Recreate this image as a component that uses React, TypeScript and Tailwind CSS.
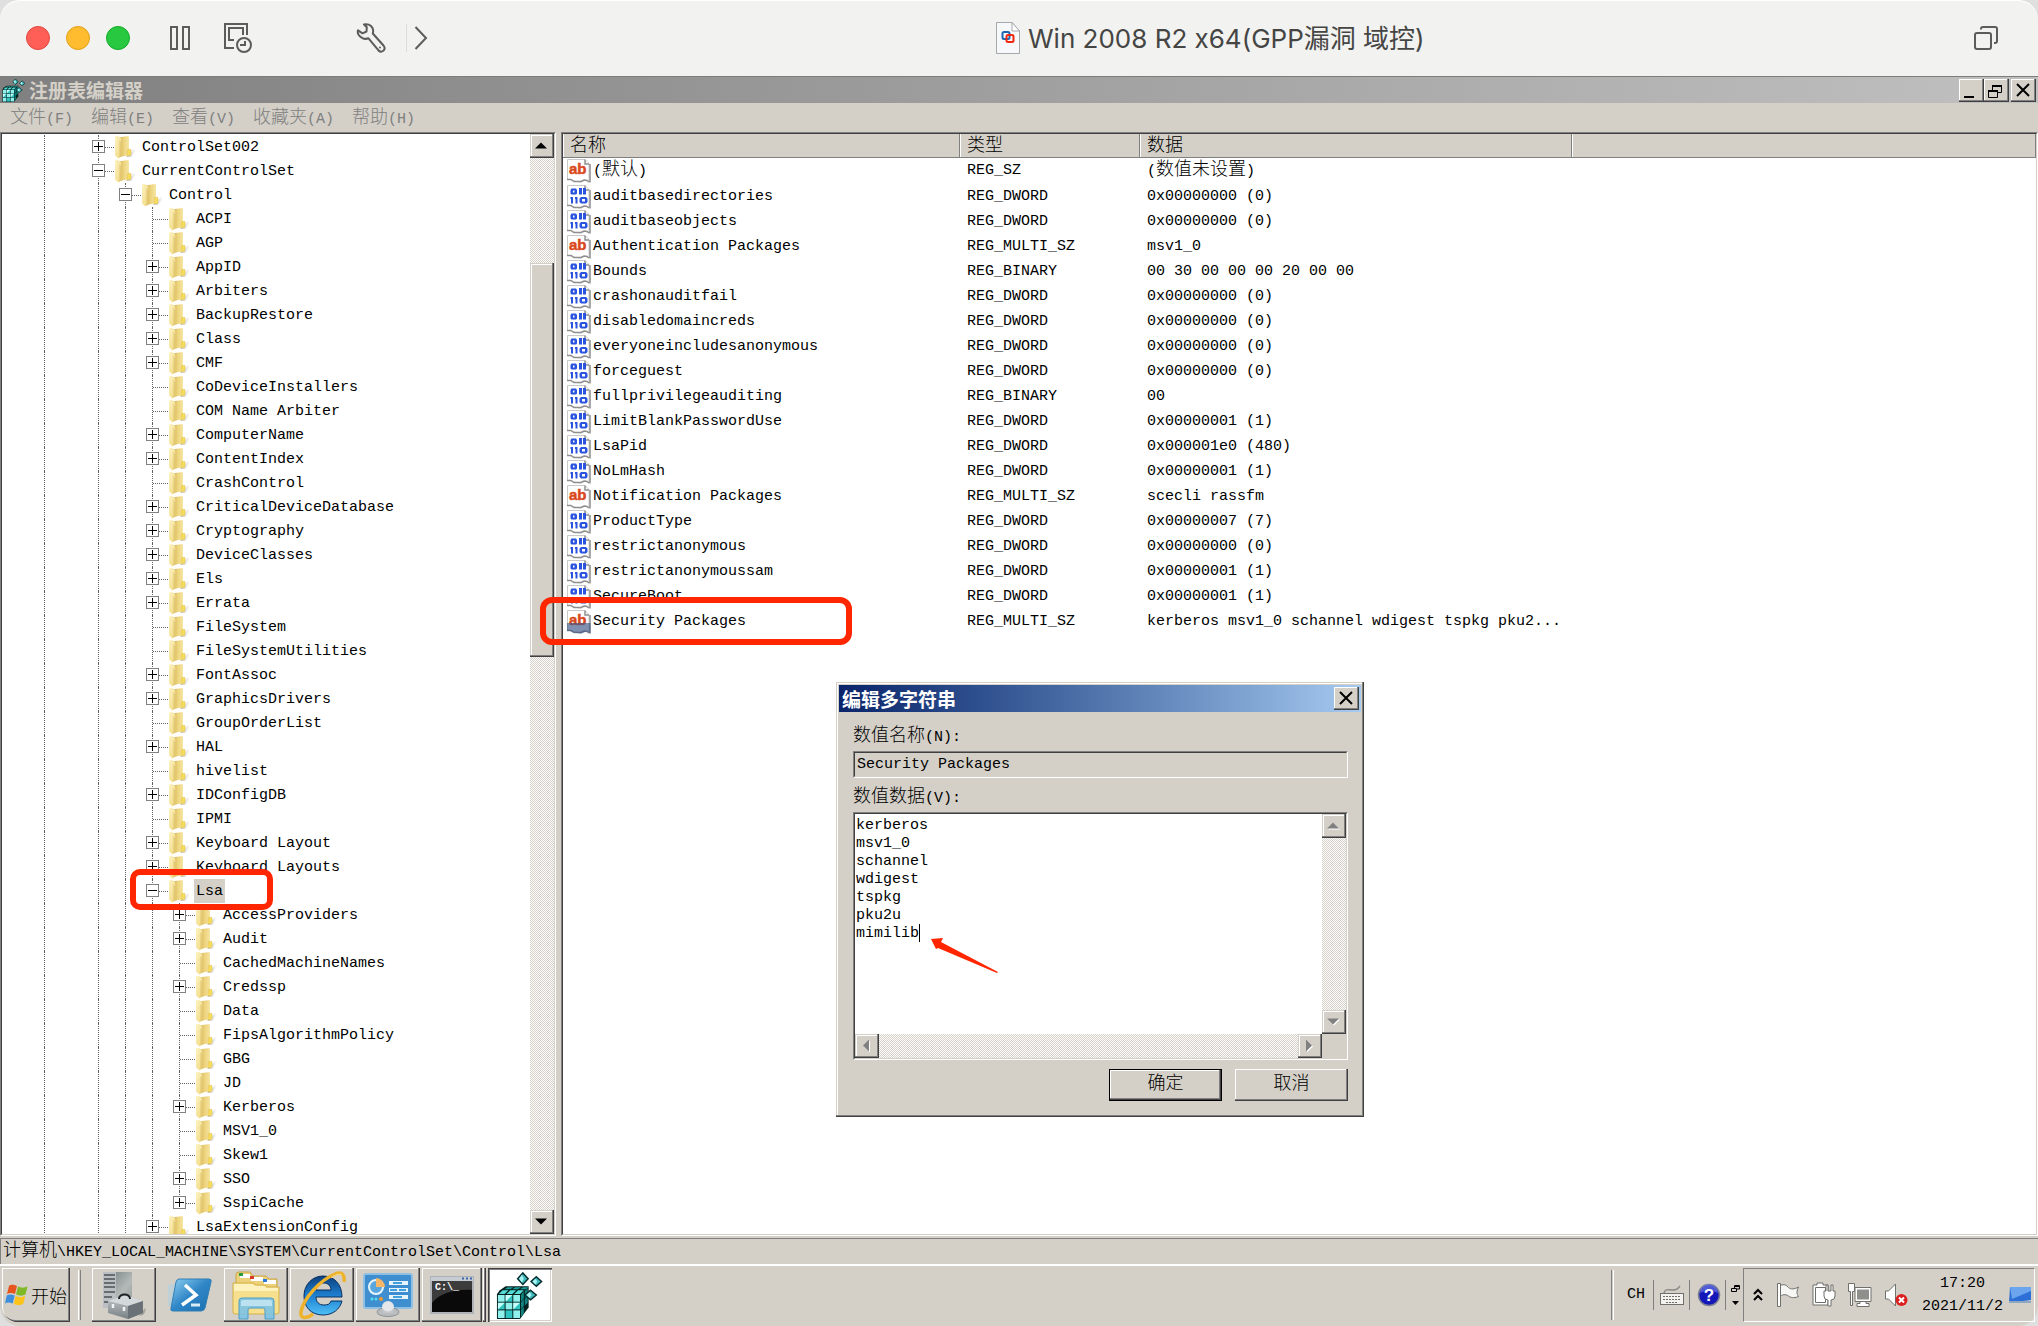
import React from "react";

const MONO = "font-['Liberation_Mono','Noto_Sans_CJK_SC',monospace] text-[15px]";
const RAISED =
  "bg-[#d4d0c8] shadow-[inset_-1px_-1px_0_#404040,inset_-2px_-2px_0_#808080,inset_1px_1px_0_#d4d0c8,inset_2px_2px_0_#ffffff]";
const RAISED_HI =
  "bg-[#d4d0c8] shadow-[inset_-1px_-1px_0_#404040,inset_-2px_-2px_0_#808080,inset_1px_1px_0_#ffffff]";
const TRACK =
  "bg-[repeating-conic-gradient(#ffffff_0_25%,#d4d0c8_0_50%)] bg-[length:2px_2px]";

/* Chinese characters are two columns wide, so they take a larger size than the Latin ones. */
function T({ children }: { children: string }) {
  return (
    <>
      {children.split(/([\u4e00-\u9fff]+)/).map((part, i) =>
        i % 2 ? (
          <span key={i} className="font-['Noto_Sans_CJK_SC',sans-serif] text-[18px] font-light leading-none">
            {part}
          </span>
        ) : (
          part
        ),
      )}
    </>
  );
}

function Sunken({ className, children }: { className: string; children: React.ReactNode }) {
  return (
    <div
      className={`flex border border-t-[#808080] border-r-white border-b-white border-l-[#808080] ${className}`}
    >
      <div className="flex min-w-0 flex-1 border border-t-[#404040] border-r-[#d4d0c8] border-b-[#d4d0c8] border-l-[#404040]">
        {children}
      </div>
    </div>
  );
}

/* ---------- host window toolbar ---------- */

function HostBar() {
  return (
    <header className="relative flex h-[77px] shrink-0 items-center rounded-t-[20px] border-b border-[#7b7f7b] bg-[#f2f2f0] pl-[26px] pr-[40px] shadow-[inset_0_1px_0_#ffffff]">
      <div className="flex gap-4">
        <button aria-label="关闭" className="size-6 rounded-full border border-[#e2463f] bg-[#ff5f57]" />
        <button aria-label="最小化" className="size-6 rounded-full border border-[#e1a116] bg-[#febc2e]" />
        <button aria-label="缩放" className="size-6 rounded-full border border-[#12ac28] bg-[#28c840]" />
      </div>
      <button aria-label="挂起" className="ml-10">
        <svg width="20" height="26" viewBox="0 0 20 26" fill="none" stroke="#5c5c5b" strokeWidth="2">
          <rect x="1" y="2" width="6" height="22" />
          <rect x="13" y="2" width="6" height="22" />
        </svg>
      </button>
      <button aria-label="快照" className="ml-[34px]">
        <svg width="28" height="30" viewBox="0 0 28 30" fill="none" stroke="#5c5c5b" strokeWidth="2">
          <path d="M10 25H1V1h22v11" />
          <path d="M10 17H5V5h14v7" />
          <circle cx="20" cy="22" r="7" />
          <path d="M21 18v4h-5" />
        </svg>
      </button>
      <button aria-label="设置" className="ml-[104px]">
        <svg width="30" height="30" viewBox="0 0 30 30" fill="none" stroke="#5c5c5b" strokeWidth="2" strokeLinejoin="round">
          <path d="M8 1.500c3-1 7 .3 8.500 3.500.9 2 .8 3.800.3 5.500L27.500 22.500c1.500 2 1.300 4-.2 5.300-1.500 1.200-3.500 1-5-.6L12.500 15.300c-2 .8-4.500.7-6.500-.5C2.800 13 1.200 10 2 7.300l4.500 3 4-1.800.3-4.200z" />
          <circle cx="24" cy="24.500" r="1" fill="#5c5c5b" stroke="none" />
        </svg>
      </button>
      <div className="ml-[20px] h-7 w-px bg-[#dcdcda]" />
      <button aria-label="更多" className="ml-[7px]">
        <svg width="14" height="26" viewBox="0 0 14 26" fill="none" stroke="#5c5c5b" strokeWidth="2">
          <path d="M1.500 2 12 13 1.500 24" />
        </svg>
      </button>
      <div className="ml-[568px] flex items-center gap-[8px]">
        <svg width="24" height="32" viewBox="0 0 24 32">
          <path d="M.5.5h15.500l7.500 8.500v22.500H.5z" fill="#f7f8fa" stroke="#a5a8ad" />
          <path d="M16 .5V9h7.500z" fill="#ffffff" stroke="#a5a8ad" />
          <rect x="6.500" y="10" width="7" height="7" rx="1.500" fill="none" stroke="#1f66b0" strokeWidth="2" />
          <rect x="10.500" y="13" width="7" height="7" rx="1.500" fill="none" stroke="#f3260f" strokeWidth="2" />
        </svg>
        <h1 className="whitespace-nowrap pt-[2px] font-['Inter','Noto_Sans_CJK_SC',sans-serif] text-[26px] leading-8 text-[#454544] [font-feature-settings:'calt'_0]">
          Win 2008 R2 x64(GPP漏洞 域控)
        </h1>
      </div>
      <button aria-label="窗口" className="ml-auto">
        <svg width="24" height="26" viewBox="0 0 24 26" fill="none" stroke="#5c5c5b" strokeWidth="2">
          <rect x="1" y="8" width="16" height="16" rx="2" />
          <path d="M7 4.500V4a2 2 0 0 1 2-2h12a2 2 0 0 1 2 2v12a2 2 0 0 1-2 2h-1" />
        </svg>
      </button>
    </header>
  );
}

/* ---------- icons ---------- */

function RegeditIcon({ className }: { className: string }) {
  return (
    <svg className={className} viewBox="0 0 48 50">
      <path d="M0 24 3 20 9 16h24v22l-9 12H0z" fill="#04211f" />
      {[0, 1, 2].map((r) =>
        [0, 1, 2].map((c) => (
          <g key={`${r}${c}`}>
            <path d={["M1 25h7v7H1z", "M9 25h7v7H9z", "M17 25h7v7h-7z", "M1 33h7v7H1z", "M9 33h7v7H9z", "M17 33h7v7h-7z", "M1 41h7v8H1z", "M9 41h7v8H9z", "M17 41h7v8h-7z"][r * 3 + c]} fill={(r + c) % 2 ? "#2fc4bf" : "#8ff0ec"} />
          </g>
        )),
      )}
      <path d="M2 24l4-4h6l-4 4zM10 24l4-4h6l-4 4zM18 24l4-4h6l-4 4z" fill="#54dcd7" />
      <path d="M8 19l3-2h6l-3 2zM16 19l3-2h6l-3 2zM24 19l3-2h6l-3 2z" fill="#1a9c98" />
      <path d="M9 25h7l-7 7zM1 33h7l-7 7zM17 33h7l-7 7z" fill="#c6fffc" />
      <path d="M25 25l3-4v7l-3 4zM29 21l3-3v7l-3 3zM25 33l3-4v7l-3 4zM29 29l3-3v7l-3 3zM25 41l3-4v7l-3 4z" fill="#118481" />
      <path d="M27 2l5.500 6-5.500 6-5.500-6z" fill="#3fb9bb" stroke="#062b2b" strokeWidth="1.500" />
      <path d="M41 6l5.500 5-5.500 5-5.500-5z" fill="#3fb9bb" stroke="#062b2b" strokeWidth="1.500" />
      <path d="M35 20l6 5-6 5-6-5z" fill="#3fb9bb" stroke="#062b2b" strokeWidth="1.500" />
      <path d="M26 4l2 4-2 4-3-4zM40 8l2 3-2 3-3-3zM34 22l2 3-2 3-3-3z" fill="#a8f3f1" />
    </svg>
  );
}

function FolderIcon() {
  return (
    <svg width="24" height="24" viewBox="0 0 24 24" className="shrink-0">
      <defs>
        <linearGradient id="folderFront" x1="0" x2="1" y1="0" y2="1">
          <stop offset="0" stopColor="#fdf4c4" />
          <stop offset="1" stopColor="#f0d67c" />
        </linearGradient>
        <linearGradient id="folderBack" x1="0" x2="1">
          <stop offset="0" stopColor="#c9a548" />
          <stop offset=".5" stopColor="#ecd27a" />
          <stop offset="1" stopColor="#f6e6a4" />
        </linearGradient>
        <linearGradient id="folderShade" x1="0" x2="1">
          <stop offset="0" stopColor="#bdbdbd" />
          <stop offset="1" stopColor="#bdbdbd" stopOpacity="0" />
        </linearGradient>
      </defs>
      <path d="M12 22l8-8q2 0 2 2l-5 6z" fill="url(#folderShade)" />
      <path d="M4 2.500 14 1l1 1v18l-9 2z" fill="url(#folderBack)" />
      <path d="M1 1.500 3 .5l4 2.500.5 4V21l-3 2.500L1 20.500z" fill="url(#folderFront)" />
      <path d="M7.500 7v14l-2 2V5z" fill="#d8b962" fillOpacity=".6" />
      <path d="M13.500 14.500h3.500V20l-4 1z" fill="#f5dc5e" stroke="#e0c04a" strokeWidth=".5" />
    </svg>
  );
}

function ValueIcon({ text, selected }: { text: boolean; selected?: boolean }) {
  return (
    <svg width="24" height="24" viewBox="0 0 24 24" className="shrink-0">
      <path d="M.5.5H18l4 4V23l-3-2-2 .5-3 1.500-8-1L4 20.500H.5z" fill="#ffffff" stroke="#c9c9c9" />
      <path d="M18 .5V5h4M23 5v18.500M0 20.500h4l3 2h7l3-1.500 3 .5 2 1.500" fill="none" stroke="#8f8f8f" strokeWidth="1.500" />
      {text ? (
        <text x="2" y="15" fill="#d9481c" stroke="#d9481c" strokeWidth=".5" fontFamily="Liberation Sans" fontWeight="bold" fontSize="15">
          ab
        </text>
      ) : (
        <g fill="#2a53e0">
          <path d="M4.500 3.500H9L10 5v3.500l-1 1H4.500l-1-1V5zM6 5.500v2h1.500v-2z" fillRule="evenodd" />
          <path d="M12 3h3v6.500h-3zM16 3h3v6.500h-3z" />
          <path d="M3.500 12H6v6.500H4V14h-.5zM8 12h2.500v6.500h-2V14H8z" />
          <path d="M14 12h5l1.500 1.500V17L19 18.500h-5L12.500 17v-3.500zM15 14v2.500h3V14z" fillRule="evenodd" />
        </g>
      )}
      {selected && <path d="M0 13h23.500v10.500l-4-2-5.500 2-8-1L3 21H0z" fill="#3b5486" fillOpacity=".65" />}
    </svg>
  );
}

/* ---------- registry editor ---------- */

function WindowButton({ label, children }: { label: string; children: React.ReactNode }) {
  return (
    <button aria-label={label} className={`flex h-[23px] w-[25px] items-center justify-center ${RAISED_HI}`}>
      <svg width="19" height="17" viewBox="0 0 19 17" fill="none" stroke="#000000" strokeWidth="2">
        {children}
      </svg>
    </button>
  );
}

function EditorTitle() {
  return (
    <div className="flex h-[26px] shrink-0 items-center bg-linear-to-r from-[#808080] to-[#c0c0c0] pl-[2px] pr-[2px]">
      <RegeditIcon className="size-6" />
      <h2 className="ml-[3px] flex-1 font-['Noto_Sans_CJK_SC',sans-serif] text-[19px] font-bold leading-6 text-[#d4d0c8]">
        注册表编辑器
      </h2>
      <div className="flex">
        <WindowButton label="最小化">
          <path d="M2 15h10" />
        </WindowButton>
        <WindowButton label="还原">
          <path d="M5.500 8V3.500h9v7H11" strokeWidth="1" />
          <path d="M5 4h10M1 9h10" />
          <path d="M1.500 8.500h9v7h-9z" strokeWidth="1" />
        </WindowButton>
        <div className="w-[2px]" />
        <WindowButton label="关闭">
          <path d="M3 2l12 12M15 2L3 14" />
        </WindowButton>
      </div>
    </div>
  );
}

function MenuBar() {
  return (
    <nav className={`flex h-[29px] shrink-0 items-center gap-[18px] pl-[10px] pt-[2px] text-[#808080] ${MONO}`}>
      {["文件(F)", "编辑(E)", "查看(V)", "收藏夹(A)", "帮助(H)"].map((m) => (
        <button key={m} className="whitespace-nowrap leading-6">
          <T>{m}</T>
        </button>
      ))}
    </nav>
  );
}

type Node = [name: string, level: number, state: "+" | "-" | ""];

const TREE: Node[] = [
  ["ControlSet002", 2, "+"],
  ["CurrentControlSet", 2, "-"],
  ["Control", 3, "-"],
  ["ACPI", 4, ""],
  ["AGP", 4, ""],
  ["AppID", 4, "+"],
  ["Arbiters", 4, "+"],
  ["BackupRestore", 4, "+"],
  ["Class", 4, "+"],
  ["CMF", 4, "+"],
  ["CoDeviceInstallers", 4, ""],
  ["COM Name Arbiter", 4, ""],
  ["ComputerName", 4, "+"],
  ["ContentIndex", 4, "+"],
  ["CrashControl", 4, ""],
  ["CriticalDeviceDatabase", 4, "+"],
  ["Cryptography", 4, "+"],
  ["DeviceClasses", 4, "+"],
  ["Els", 4, "+"],
  ["Errata", 4, "+"],
  ["FileSystem", 4, ""],
  ["FileSystemUtilities", 4, ""],
  ["FontAssoc", 4, "+"],
  ["GraphicsDrivers", 4, "+"],
  ["GroupOrderList", 4, ""],
  ["HAL", 4, "+"],
  ["hivelist", 4, ""],
  ["IDConfigDB", 4, "+"],
  ["IPMI", 4, ""],
  ["Keyboard Layout", 4, "+"],
  ["Keyboard Layouts", 4, "+"],
  ["Lsa", 4, "-"],
  ["AccessProviders", 5, "+"],
  ["Audit", 5, "+"],
  ["CachedMachineNames", 5, ""],
  ["Credssp", 5, "+"],
  ["Data", 5, ""],
  ["FipsAlgorithmPolicy", 5, ""],
  ["GBG", 5, ""],
  ["JD", 5, ""],
  ["Kerberos", 5, "+"],
  ["MSV1_0", 5, ""],
  ["Skew1", 5, ""],
  ["SSO", 5, "+"],
  ["SspiCache", 5, "+"],
  ["LsaExtensionConfig", 4, "+"],
];

function TreeRow({ node: [name, level, state] }: { node: Node }) {
  const selected = name === "Lsa";
  return (
    <li role="treeitem" className="relative flex h-6 items-center">
      {Array.from({ length: level }, (_, i) => (
        <span key={i} className="flex h-6 w-[27px] shrink-0 pl-[13px]">
          {i !== 1 && <span className="border-l border-dotted border-[#606060]" />}
        </span>
      ))}
      <span className="relative flex h-6 w-[29px] shrink-0 items-center pl-[13px]">
        <span
          className={`border-l border-dotted border-[#606060] ${name === "SspiCache" ? "h-3 self-start" : "h-6"}`}
        />
        <span className="flex-1 border-t border-dotted border-[#606060]" />
        {state && (
          <button
            aria-label={state === "+" ? "展开" : "折叠"}
            className="absolute left-[7px] top-[5px] flex size-[13px] items-center justify-center border border-[#808080] bg-white"
          >
            <svg width="9" height="9" viewBox="0 0 9 9" stroke="#000000" strokeWidth="1">
              <path d={state === "+" ? "M0 4.500h9M4.500 0v9" : "M0 4.500h9"} />
            </svg>
          </button>
        )}
      </span>
      <FolderIcon />
      <span
        className={`ml-[2px] whitespace-pre px-[2px] pt-[2px] leading-[22px] ${selected ? "bg-[#d4d0c8]" : ""}`}
      >
        {name}
      </span>
      {selected && (
        <span className="absolute left-[99px] top-[-10px] z-10 h-[41px] w-[143px] rounded-[10px] border-[6px] border-[#ff2600]" />
      )}
    </li>
  );
}

function ScrollArrow({ dir, disabled }: { dir: "up" | "down" | "left" | "right"; disabled?: boolean }) {
  const d = {
    up: "M6 3.500 12 9.500H0z",
    down: "M0 3.500h12L6 9.500z",
    left: "M3 6.500 9 .5v12z",
    right: "M3 .5 9 6.500 3 12.500z",
  }[dir];
  const label = { up: "向上滚动", down: "向下滚动", left: "向左滚动", right: "向右滚动" }[dir];
  return (
    <button aria-label={label} className={`flex size-6 shrink-0 items-center justify-center ${RAISED}`}>
      <svg width="14" height="14" viewBox="0 0 14 14">
        {disabled && <path d={d} fill="#ffffff" transform="translate(1 1)" />}
        <path d={d} fill={disabled ? "#808080" : "#000000"} />
      </svg>
    </button>
  );
}

function TreePane() {
  return (
    <Sunken className="w-[556px] shrink-0 bg-white">
      <ul role="tree" aria-label="注册表项" className={`min-h-0 flex-1 overflow-hidden pl-[29px] pt-px text-black ${MONO}`}>
        {TREE.map((n, i) => (
          <TreeRow key={i} node={n} />
        ))}
      </ul>
      <div className={`flex w-6 shrink-0 flex-col ${TRACK}`}>
        <ScrollArrow dir="up" />
        <div className="h-[105px]" />
        <div className={`h-[394px] ${RAISED}`} />
        <div className="mt-auto flex">
          <ScrollArrow dir="down" />
        </div>
      </div>
    </Sunken>
  );
}

const VALUES: [name: string, type: string, data: string][] = [
  ["(默认)", "REG_SZ", "(数值未设置)"],
  ["auditbasedirectories", "REG_DWORD", "0x00000000 (0)"],
  ["auditbaseobjects", "REG_DWORD", "0x00000000 (0)"],
  ["Authentication Packages", "REG_MULTI_SZ", "msv1_0"],
  ["Bounds", "REG_BINARY", "00 30 00 00 00 20 00 00"],
  ["crashonauditfail", "REG_DWORD", "0x00000000 (0)"],
  ["disabledomaincreds", "REG_DWORD", "0x00000000 (0)"],
  ["everyoneincludesanonymous", "REG_DWORD", "0x00000000 (0)"],
  ["forceguest", "REG_DWORD", "0x00000000 (0)"],
  ["fullprivilegeauditing", "REG_BINARY", "00"],
  ["LimitBlankPasswordUse", "REG_DWORD", "0x00000001 (1)"],
  ["LsaPid", "REG_DWORD", "0x000001e0 (480)"],
  ["NoLmHash", "REG_DWORD", "0x00000001 (1)"],
  ["Notification Packages", "REG_MULTI_SZ", "scecli rassfm"],
  ["ProductType", "REG_DWORD", "0x00000007 (7)"],
  ["restrictanonymous", "REG_DWORD", "0x00000000 (0)"],
  ["restrictanonymoussam", "REG_DWORD", "0x00000001 (1)"],
  ["SecureBoot", "REG_DWORD", "0x00000001 (1)"],
  ["Security Packages", "REG_MULTI_SZ", "kerberos msv1_0 schannel wdigest tspkg pku2..."],
];

function ValueTable() {
  return (
    <table className={`w-full table-fixed border-collapse self-start text-left text-black ${MONO}`}>
      <colgroup>
        <col className="w-[397px]" />
        <col className="w-[180px]" />
        <col className="w-[432px]" />
        <col />
      </colgroup>
      <thead>
        <tr>
          {["名称", "类型", "数据", ""].map((h, i) => (
            <th
              key={i}
              className="h-[23px] bg-[#d4d0c8] p-0 pl-[7px] font-normal leading-5 shadow-[inset_-1px_-1px_0_#808080,inset_1px_0_0_#ffffff]"
            >
              <T>{h}</T>
            </th>
          ))}
        </tr>
      </thead>
      <tbody>
        {VALUES.map(([name, type, data]) => (
          <tr key={name}>
            <td className="relative h-[25px] p-0 pl-1">
              <div className="flex items-center gap-[2px] whitespace-pre leading-6">
                <ValueIcon text={type.endsWith("SZ")} selected={name === "Security Packages"} />
                <span>
                  <T>{name}</T>
                </span>
              </div>
              {name === "Security Packages" && (
                <span className="absolute left-[-23px] top-[-12px] z-10 h-12 w-[312px] rounded-xl border-[6px] border-[#ff2600]" />
              )}
            </td>
            <td className="p-0 pl-[7px] leading-6">{type}</td>
            <td className="whitespace-pre p-0 pl-[7px] leading-6">
              <T>{data}</T>
            </td>
            <td />
          </tr>
        ))}
      </tbody>
    </table>
  );
}

function EditDialog() {
  return (
    <section
      role="dialog"
      aria-label="编辑多字符串"
      className={`absolute left-[836px] top-[550px] z-20 w-[528px] bg-[#d4d0c8] p-[3px] pb-4 text-black shadow-[inset_-1px_-1px_0_#404040,inset_-2px_-2px_0_#808080,inset_1px_1px_0_#d4d0c8,inset_2px_2px_0_#ffffff] ${MONO}`}
    >
      <div className="flex h-[27px] items-center bg-linear-to-r from-[#0a246a] to-[#a6caf0] pl-[3px] pr-[2px]">
        <h3 className="flex-1 font-['Noto_Sans_CJK_SC',sans-serif] text-[19px] font-bold leading-6 text-white">
          编辑多字符串
        </h3>
        <WindowButton label="关闭对话框">
          <path d="M3 2l12 12M15 2L3 14" />
        </WindowButton>
      </div>
      <div className="pl-[14px] pr-[13px] pt-3">
        <label htmlFor="value-name" className="block h-[27px] leading-[26px]">
          <T>数值名称(N):</T>
        </label>
        <Sunken className="h-[27px]">
          <input
            id="value-name"
            readOnly
            defaultValue="Security Packages"
            className="min-w-0 flex-1 bg-[#d4d0c8] px-[2px] pt-[2px] outline-none"
          />
        </Sunken>
        <label htmlFor="value-data" className="mt-[7px] block h-[27px] leading-[26px]">
          <T>数值数据(V):</T>
        </label>
        <Sunken className="h-[248px] bg-[#d4d0c8]">
          <div className="flex flex-1 flex-col">
            <div className="flex flex-1">
              <div className="relative flex flex-1">
                <textarea
                  id="value-data"
                  defaultValue={"kerberos\nmsv1_0\nschannel\nwdigest\ntspkg\npku2u\nmimilib"}
                  className="flex-1 resize-none overflow-hidden bg-white py-[3px] pl-px leading-[18px] outline-none"
                />
                <span className="absolute left-[64px] top-[110px] h-[18px] w-px bg-black" />
                <svg width="68" height="36" viewBox="0 0 68 36" className="absolute left-[76px] top-[124px]">
                  <path d="M0 1 12 0 10 4 67 34 66 35 7 10 5 11z" fill="#ff2600" />
                </svg>
              </div>
              <div className={`flex w-6 flex-col justify-between ${TRACK}`}>
                <ScrollArrow dir="up" disabled />
                <ScrollArrow dir="down" disabled />
              </div>
            </div>
            <div className={`mr-6 flex h-6 justify-between ${TRACK}`}>
              <ScrollArrow dir="left" disabled />
              <ScrollArrow dir="right" disabled />
            </div>
          </div>
        </Sunken>
        <div className="mt-[9px] flex justify-end gap-[13px]">
          <button className="h-8 w-[113px] border border-black bg-[#d4d0c8] shadow-[inset_-1px_-1px_0_#404040,inset_-2px_-2px_0_#808080,inset_1px_1px_0_#ffffff]">
            <T>确定</T>
          </button>
          <button className={`h-8 w-[113px] ${RAISED_HI}`}>
            <T>取消</T>
          </button>
        </div>
      </div>
    </section>
  );
}

/* ---------- taskbar ---------- */

function TaskButton({ label, flat, children }: { label: string; flat?: boolean; children: React.ReactNode }) {
  return (
    <button
      aria-label={label}
      className={
        flat
          ? "flex h-[54px] w-16 items-center justify-center"
          : `flex h-[54px] w-16 items-center justify-center ${RAISED_HI}`
      }
    >
      {children}
    </button>
  );
}

function Taskbar() {
  return (
    <footer
      className={`flex h-[62px] shrink-0 items-center rounded-b-[20px] bg-[#d4d0c8] py-1 pl-[2px] pr-[3px] text-black shadow-[inset_0_2px_0_#ffffff] ${MONO}`}
    >
      <button className={`flex h-[54px] w-[68px] items-center gap-[2px] rounded-bl-[16px] pl-[3px] ${RAISED_HI}`}>
        <svg width="24" height="24" viewBox="0 0 24 24" className="shrink-0">
          <path d="M4 3c3-2 5-1 8 0l-2 8c-3-1-5-1.500-8 0z" fill="#e8541e" />
          <path d="M13 3.500c3 1.500 6 1.500 9.500 0l-2 8c-3 1.500-6 1.500-9.500 0z" fill="#7fb927" />
          <path d="M1.700 12.500c3-1.500 5-1 8 0l-2 8c-3-1-5-1.500-7.700 0z" fill="#3f8ede" />
          <path d="M10.700 13c3 1.500 6 1.500 9.500 0l-2 8c-3 1.500-6 1.500-9.500 0z" fill="#fcc41b" />
        </svg>
        <T>开始</T>
      </button>
      <span className="ml-2 mr-[11px] h-[50px] w-[3px] border-l border-r border-l-white border-r-[#808080]" />
      <div className="flex gap-[2px]">
        <TaskButton label="服务器管理器">
          <svg width="46" height="50" viewBox="0 0 46 50">
            <defs>
              <linearGradient id="tower" x1="0" y1="0" x2="1" y2="1">
                <stop offset="0" stopColor="#6f777a" />
                <stop offset=".6" stopColor="#b3bab8" />
                <stop offset="1" stopColor="#8f9799" />
              </linearGradient>
              <linearGradient id="toolbox" x1="0" y1="0" x2="0" y2="1">
                <stop offset="0" stopColor="#c3c9cb" />
                <stop offset="1" stopColor="#7a8185" />
              </linearGradient>
            </defs>
            <path d="M2 2h29v36H2z" fill="url(#tower)" />
            <path d="M2 2h13v36H2z" fill="#b9bfc3" />
            <path d="M3 5h11M3 9h11M3 13h11M3 17h11M3 22h11M3 27h8M3 32h6" stroke="#4b5155" strokeWidth="1.500" />
            <path d="M38 46l6-8q2 3-2 7z" fill="#a9a59d" />
            <path d="M7 31l18-6 17 6v12l-15 6-20-6z" fill="url(#toolbox)" />
            <path d="M7 31l18-6 17 6-15 5z" fill="#d3d8da" />
            <path d="M27 36v13l15-6V31z" fill="#6b7277" />
            <path d="M18 29c0-6 11-6 11 0" fill="none" stroke="#1f2326" strokeWidth="2" />
            <path d="M12 34v4M23 37v4" stroke="#f1f3f4" strokeWidth="2.500" />
          </svg>
        </TaskButton>
        <TaskButton label="Windows PowerShell" flat>
          <svg width="44" height="34" viewBox="0 0 44 34">
            <defs>
              <linearGradient id="ps" x1="0" y1="0" x2="1" y2="1">
                <stop offset="0" stopColor="#8fd0f3" />
                <stop offset=".5" stopColor="#2f86c6" />
                <stop offset="1" stopColor="#1b6fae" />
              </linearGradient>
            </defs>
            <path d="M0 6h8L3 28H0z" fill="#a9cfe3" opacity=".5" />
            <path d="M11 1h30q3 0 2 3l-6 26q-1 3-4 3H5q-3 0-2-3L8 4q1-3 3-3z" fill="url(#ps)" stroke="#2f7fb6" />
            <path d="M17 7l11 10-14 10" fill="none" stroke="#ffffff" strokeWidth="3.500" />
            <path d="M23 27h9" stroke="#d8ecf8" strokeWidth="3" />
          </svg>
        </TaskButton>
        <TaskButton label="Windows 资源管理器">
          <svg width="48" height="50" viewBox="0 0 48 50">
            <path d="M4 14V5q0-3 3-3h11l3 4h13l3 3h8v20H4z" fill="#ecd07a" stroke="#c9a546" />
            <path d="M8 4h10v4H8zM19 7h12v4H19zM32 10h12v4H32z" fill="#ffffff" />
            <path d="M7 3h4v3H7z" fill="#2a9a3c" />
            <path d="M18 6h4v3h-4z" fill="#d8382a" />
            <path d="M31 9h4v3h-4z" fill="#2a7bd8" />
            <path d="M1 13h20l3 2h9l2 2h12v25q0 2-2 2H3q-2 0-2-2z" fill="#f6e08e" stroke="#d5b04a" />
            <path d="M2 14h18l3 2h9l2 2h12v3H2z" fill="#fdf2bd" />
            <path d="M7 49V31q0-3 3-3h29q3 0 3 3v18h-9V40q0-2-2-2H18q-2 0-2 2v9z" fill="#7cc3e6" fillOpacity=".9" stroke="#4f9cc8" />
            <path d="M9 32q0-2 2-2h27q2 0 2 2v4H9z" fill="#c9e9f7" fillOpacity=".8" />
          </svg>
        </TaskButton>
        <TaskButton label="Internet Explorer">
          <svg width="48" height="50" viewBox="0 0 48 50">
            <defs>
              <linearGradient id="ie" x1="0" y1="0" x2="0" y2="1">
                <stop offset="0" stopColor="#0c3f7c" />
                <stop offset=".5" stopColor="#1d7fd0" />
                <stop offset="1" stopColor="#4fc0f6" />
              </linearGradient>
            </defs>
            <path
              d="M25 6c11 0 19 8 19 21H18c0 5 3 8 8 8 4 0 6-1 7-4h11c-2 8-9 14-19 14C13 45 6 37 6 26S14 6 25 6zM18 20h15c0-4-3-7-7-7s-7 3-8 7z"
              fill="url(#ie)"
              stroke="#0b2f60"
              fillRule="evenodd"
            />
            <path d="M46 12C47 5 44 1 37 4 22 10 5 29 3 42c-1 7 5 7 12 2" fill="none" stroke="#eeb22b" strokeWidth="3.500" />
            <path d="M44 5c-3-2-7 0-11 3" fill="none" stroke="#fbe08a" strokeWidth="1" />
          </svg>
        </TaskButton>
        <TaskButton label="控制面板">
          <svg width="50" height="44" viewBox="0 0 50 44">
            <rect x="1" y="1" width="48" height="34" rx="2" fill="#3f8fd0" stroke="#8fbfe2" strokeWidth="2" />
            <circle cx="13" cy="14" r="7" fill="#5aa6de" stroke="#e6f4fd" strokeWidth="2" />
            <path d="M13 14V5a9 9 0 0 1 9 9z" fill="#f8b766" />
            <path d="M26 10h19M26 17h19M26 24h19" stroke="#e5f4fd" strokeWidth="4" />
            <path d="M30 10h9M27 17h7M36 17h7M30 24h9" stroke="#3fa0dd" strokeWidth="2" />
            <circle cx="9" cy="26" r="1.500" fill="#50e0f0" />
            <circle cx="13" cy="26" r="1.500" fill="#50e0f0" />
            <circle cx="18" cy="26" r="2" fill="#f39a2e" />
            <ellipse cx="25" cy="39" rx="11" ry="4.500" fill="#b9bdc0" stroke="#8d9194" />
            <circle cx="25" cy="34" r="6" fill="#e4e6e8" />
            <path d="M20 36q5 5 10 0v4H20z" fill="#c5c8ca" />
          </svg>
        </TaskButton>
        <div className="flex gap-px">
          <button aria-label="命令提示符" className={`flex h-[54px] w-[60px] items-center justify-center ${RAISED_HI}`}>
            <svg width="44" height="38" viewBox="0 0 44 38">
              <rect x="1" y="1" width="42" height="36" fill="#0a0a0a" stroke="#aeb3b8" strokeWidth="2" />
              <path d="M1 1h42v4H1z" fill="#c6ccd2" />
              <path d="M2 5h40v9C25 13 10 17 2 27z" fill="#3c3c3c" />
              <path d="M32 2.500h2M36 2.500h2M40 2.500h2" stroke="#3f63a8" strokeWidth="2" />
              <text x="5" y="14" fill="#ffffff" fontFamily="Liberation Mono" fontSize="10" fontWeight="bold">
                C:\_
              </text>
            </svg>
          </button>
          <span className={`h-[54px] w-[3px] ${RAISED_HI}`} />
        </div>
        <button
          aria-label="注册表编辑器"
          className="flex h-[54px] w-16 items-center justify-center bg-white shadow-[inset_1px_1px_0_#404040,inset_2px_2px_0_#808080,inset_-1px_-1px_0_#ffffff,inset_-2px_-2px_0_#d4d0c8]"
        >
          <RegeditIcon className="size-12" />
        </button>
      </div>

      <div className="ml-auto flex items-center">
        <span className="h-[50px] w-[3px] border-l border-r border-l-[#808080] border-r-white" />
        <span className="ml-[13px] w-[18px]">CH</span>
        <span className="ml-2 h-[30px] border-l border-[#808080]" />
        <svg width="24" height="20" viewBox="0 0 24 20" className="ml-[6px]">
          <path d="M4 8c1-5 5-3 8-3s5 0 8-4" fill="none" stroke="#8b8b88" strokeWidth="1.500" />
          <rect x=".5" y="8.500" width="23" height="11" fill="#f3f2ef" stroke="#6f6f6c" />
          <path d="M3 11.500h18M3 14.500h18M6 17.500h12" stroke="#6f6f6c" strokeDasharray="2 1" />
        </svg>
        <span className="ml-[5px] h-[30px] border-l border-[#808080]" />
        <svg width="24" height="24" viewBox="0 0 24 24" className="ml-[7px]">
          <circle cx="12" cy="12" r="10.500" fill="#1518b8" stroke="#7c7f92" strokeWidth="1.500" />
          <path d="M3 10a9 9 0 0 1 18 0c-6-3-12-3-18 0z" fill="#6a76e0" opacity=".7" />
          <text x="12" y="18" textAnchor="middle" fill="#ffffff" fontFamily="Liberation Sans" fontWeight="bold" fontSize="17">
            ?
          </text>
        </svg>
        <span className="ml-1 h-[30px] border-l border-[#808080]" />
        <svg width="10" height="22" viewBox="0 0 10 22" className="ml-[5px]" fill="none" stroke="#000000">
          <path d="M3.500 4V1.500h5V5H6M3.500 2.500h5M.5 4.500h5v3h-5z" />
          <path d="M1 17h7l-3.500 4z" fill="#000000" stroke="none" />
        </svg>
        <div className="ml-[2px] flex h-[54px] w-[292px] items-center border border-t-[#808080] border-r-white border-b-white border-l-[#808080] pl-[9px] pr-[2px]">
          <button aria-label="显示隐藏的图标">
            <svg width="10" height="14" viewBox="0 0 10 14" fill="none" stroke="#000000" strokeWidth="2">
              <path d="M1 6l4-4 4 4M1 12l4-4 4 4" />
            </svg>
          </button>
          <div className="ml-[13px] flex gap-3">
            <svg width="24" height="26" viewBox="0 0 24 26">
              <path d="M1.500 1.500h3v23h-3z" fill="#ffffff" stroke="#6f6f6c" />
              <path d="M4.500 3.500c4-2 6 0 8 2s6 2 10-.5c-2 4-2 7 0 9.500-5 2-8 1-10-.5s-5-2-8 0z" fill="#f7f7f5" stroke="#6f6f6c" />
            </svg>
            <svg width="24" height="26" viewBox="0 0 24 26" fill="#ffffff" stroke="#6f6f6c">
              <path d="M5 3V1h6v2h5v20H1V3z" />
              <path d="M3.500 5.500h10v15h-10z" />
              <path d="M12 9h2V3h2v6h3V3h2v6h2v5q0 4-4 4v6h-3v-6q-4 0-4-4z" />
            </svg>
            <svg width="24" height="26" viewBox="0 0 24 26">
              <path d="M7 5.500h16v14H7z" fill="#ffffff" stroke="#6f6f6c" />
              <path d="M9 7.500h12v10H9z" fill="#8f8f8b" />
              <path d="M12 19.500h6v2h3v3H9v-3h3z" fill="#ffffff" stroke="#6f6f6c" />
              <path d="M.5 1.500h6v8h-2v14h-2v-14h-2z" fill="#ffffff" stroke="#6f6f6c" />
            </svg>
            <svg width="24" height="26" viewBox="0 0 24 26">
              <path d="M1.500 9h3l7-7v22l-7-7h-3z" fill="#ffffff" stroke="#6f6f6c" />
              <circle cx="17.500" cy="18" r="6" fill="#dc1e1e" />
              <path d="M15 15.500l5 5M20 15.500l-5 5" stroke="#ffffff" strokeWidth="2" />
            </svg>
          </div>
          <div className="ml-auto text-center leading-[23px]">
            <div>17:20</div>
            <div>2021/11/2</div>
          </div>
          <svg width="24" height="20" viewBox="0 0 24 20" className="ml-[5px]">
            <path d="M2 2h21v13l-22 3z" fill="#2c6fd6" />
            <path d="M2 2h21v4L4 14z" fill="#6aa5ee" />
            <path d="M1 17h22" stroke="#8fa7c0" strokeWidth="2" />
          </svg>
        </div>
      </div>
    </footer>
  );
}

export default function App() {
  return (
    <div className="flex h-screen min-h-[1326px] flex-col bg-[#dfdfe0]">
      <HostBar />
      <main className="flex min-h-0 flex-1 flex-col bg-[#d4d0c8]">
        <EditorTitle />
        <MenuBar />
        <div className="relative flex min-h-0 flex-1 gap-[5px]">
          <TreePane />
          <Sunken className="min-w-0 flex-1 bg-white">
            <ValueTable />
          </Sunken>
          <EditDialog />
        </div>
        <div className={`mt-[2px] h-[26px] shrink-0 border-l border-t border-[#808080] pl-[2px] leading-6 text-black ${MONO}`}>
          <T>{"计算机\\HKEY_LOCAL_MACHINE\\SYSTEM\\CurrentControlSet\\Control\\Lsa"}</T>
        </div>
      </main>
      <Taskbar />
    </div>
  );
}
